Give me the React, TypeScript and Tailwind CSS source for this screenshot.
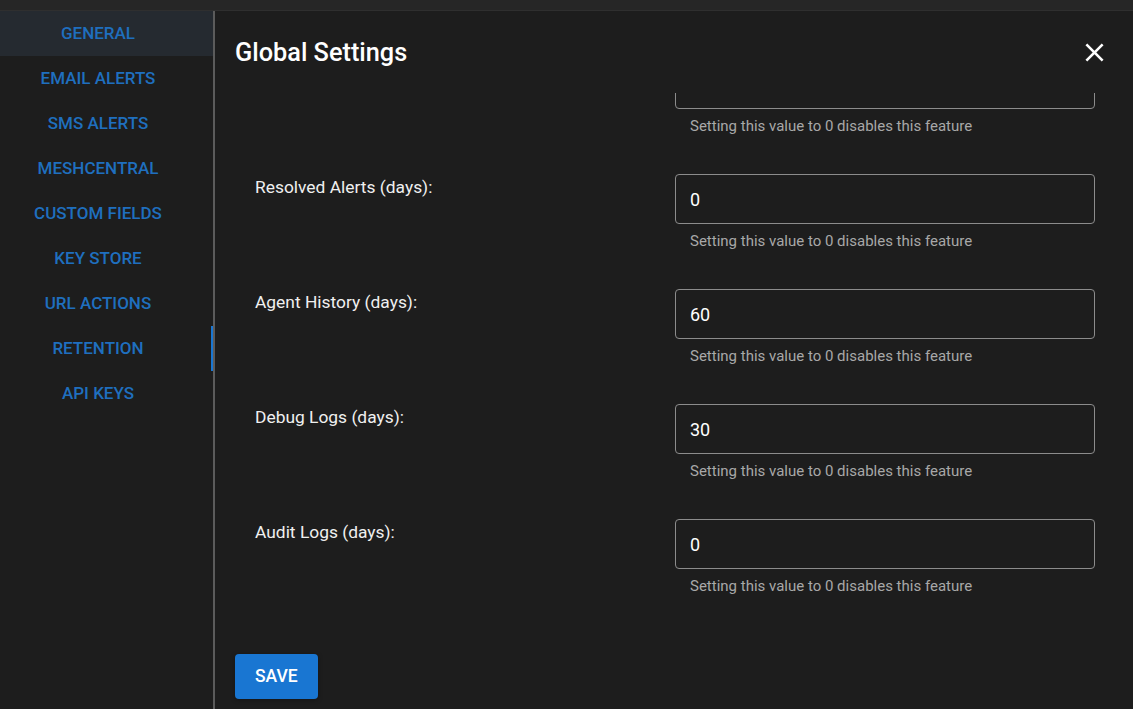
import React from "react";

const tabs = [
  "GENERAL",
  "EMAIL ALERTS",
  "SMS ALERTS",
  "MESHCENTRAL",
  "CUSTOM FIELDS",
  "KEY STORE",
  "URL ACTIONS",
  "RETENTION",
  "API KEYS",
];

const rows = [
  { label: "", value: "" },
  { label: "Resolved Alerts (days):", value: "0" },
  { label: "Agent History (days):", value: "60" },
  { label: "Debug Logs (days):", value: "30" },
  { label: "Audit Logs (days):", value: "0" },
];

export default function App() {
  return (
    <div
      className="w-[1133px] h-[709px] overflow-hidden bg-[#1d1d1d] text-white flex flex-col"
      style={{ fontFamily: "Roboto, 'Noto Sans', sans-serif" }}
    >
      <div className="h-[11px] shrink-0 bg-[#262626] border-b border-[#2f2f2f]" />
      <div className="flex flex-1 min-h-0">
        <div className="w-[215px] shrink-0 border-r-2 border-[#5b5b5b] flex flex-col">
          {tabs.map((t) => {
            const active = t === "RETENTION";
            const hover = t === "GENERAL";
            return (
              <div
                key={t}
                className={`relative h-[45px] flex items-center justify-center pr-[17px] text-[17px] font-medium text-[#1f6fbf] ${
                  hover ? "bg-[#252a30]" : ""
                }`}
              >
                {t}
                {active && (
                  <div className="absolute right-0 top-0 bottom-0 w-[2px] bg-[#1976d2]" />
                )}
              </div>
            );
          })}
        </div>
        <div className="flex-1 min-w-0 flex flex-col">
          <div className="h-[82px] shrink-0 flex items-start justify-between pl-[20px] pr-[23px] pt-[26px]">
            <div className="text-[25.3px] leading-[32px] font-medium">Global Settings</div>
            <svg width="31" height="31" viewBox="0 0 24 24" className="mt-[0px]">
              <path
                d="M19 6.41 17.59 5 12 10.59 6.41 5 5 6.41 10.59 12 5 17.59 6.41 19 12 13.41 17.59 19 19 17.59 13.41 12z"
                fill="#ffffff"
              />
            </svg>
          </div>
          <div className="flex-1 min-h-0 overflow-hidden">
            <div className="-mt-[34px] pl-[40px]">
              {rows.map((r, i) => (
                <div key={i} className="flex h-[115px]">
                  <div className="w-[420px] shrink-0 text-[17.4px] leading-[24px] pt-[1px] text-[#f0f0f0]">
                    {r.label}
                  </div>
                  <div className="w-[420px] shrink-0">
                    <div className="h-[50px] rounded-[4px] border border-[#8c8c8c] flex items-center px-[14px] pt-[1px] text-[18px] text-white">
                      {r.value}
                    </div>
                    <div className="pt-[9px] pl-[15px] text-[15px] leading-[16px] text-[#a8a8a8]">
                      Setting this value to 0 disables this feature
                    </div>
                  </div>
                </div>
              ))}
            </div>
          </div>
          <div className="shrink-0 h-[98px] pl-[20px] pt-[43px]">
            <button className="h-[45px] px-[20px] rounded-[4px] bg-[#1976d2] text-white text-[17.5px] font-medium shadow-[0_1px_5px_rgba(0,0,0,0.3)]">
              SAVE
            </button>
          </div>
        </div>
      </div>
    </div>
  );
}
